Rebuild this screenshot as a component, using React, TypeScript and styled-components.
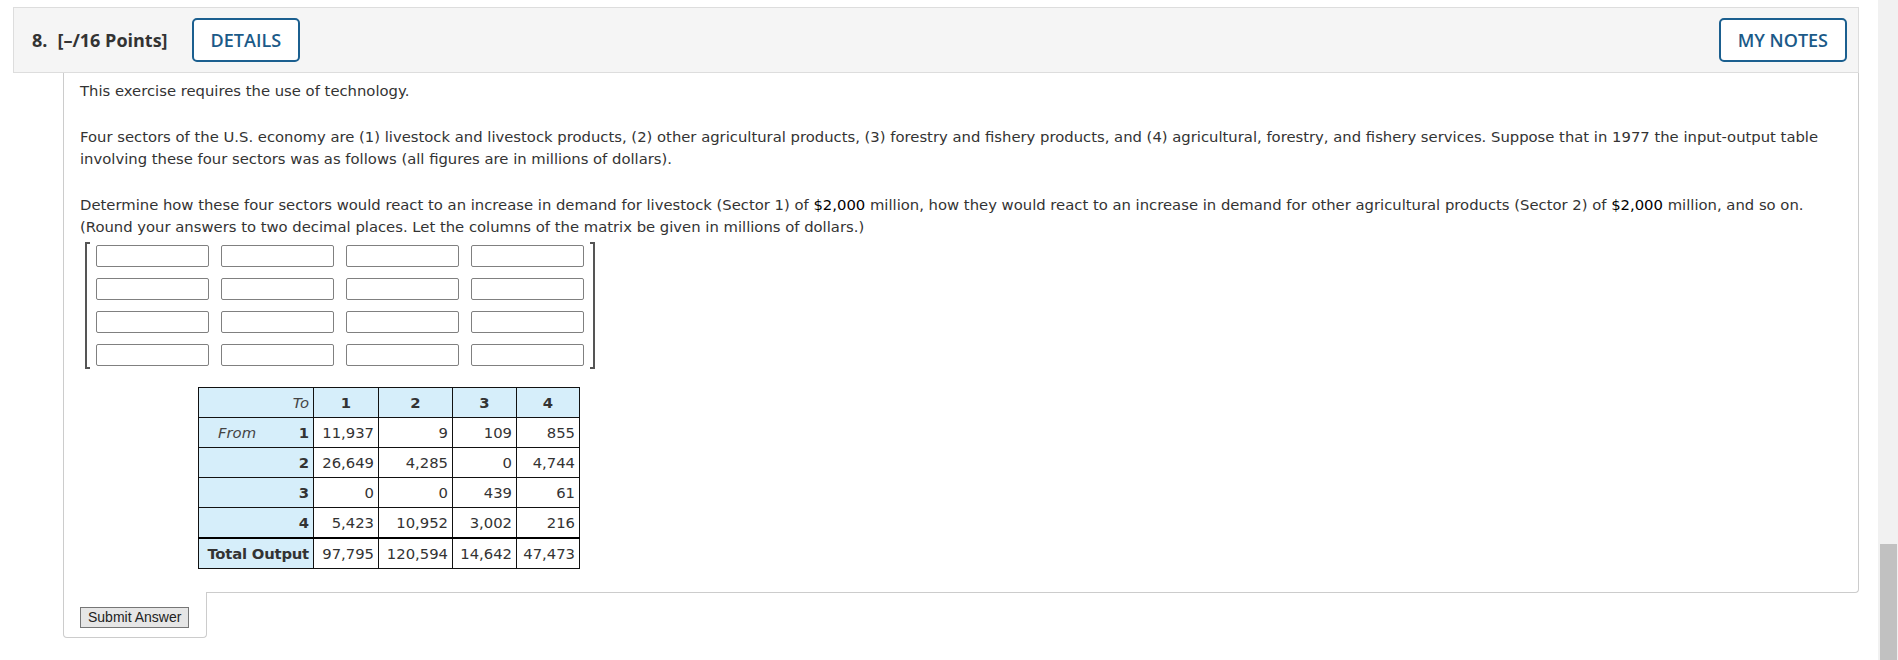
import React from "react";
import styled, { createGlobalStyle } from "styled-components";

const GlobalStyle = createGlobalStyle`
  html, body {
    margin: 0;
    padding: 0;
    height: 100%;
    overflow: hidden;
    background: #ffffff;
  }
  #root {
    height: 100%;
  }
  * {
    box-sizing: border-box;
  }
`;

const Screen = styled.div`
  display: flex;
  height: 100vh;
  width: 100%;
`;

const Page = styled.main`
  flex: 1;
  min-width: 0;
  padding: 7px 19px 0 13px;
  font-family: "DejaVu Sans", Verdana, sans-serif;
  color: #333333;
`;

const Header = styled.header`
  display: flex;
  align-items: center;
  height: 66px;
  padding: 0 11px 0 18px;
  background: #f5f5f5;
  border: 1px solid #dddddd;
  font-family: "Open Sans", sans-serif;
`;

const QuestionNumber = styled.span`
  font-size: 18px;
  font-weight: 700;
  color: #333333;
  margin-right: 10px;
`;

const Points = styled.span`
  font-size: 18px;
  font-weight: 700;
  color: #333333;
  margin-right: 24px;
`;

const HeaderButton = styled.button<{ $push?: boolean }>`
  display: flex;
  align-items: center;
  height: 44px;
  padding: 0 17px;
  margin-left: ${(p) => (p.$push ? "auto" : "0")};
  background: #ffffff;
  border: 2px solid #1b5f8f;
  border-radius: 5px;
  color: #1b5a88;
  font-family: "Open Sans", sans-serif;
  font-size: 18px;
  font-weight: 600;
  cursor: pointer;
`;

const Body = styled.div`
  margin-left: 50px;
`;

const Panel = styled.section`
  border-left: 1px solid #cccccc;
  border-right: 1px solid #cccccc;
  border-bottom: 1px solid #cccccc;
  border-bottom-right-radius: 4px;
  padding: 7px 17px 23px 16px;
`;

const Paragraph = styled.p<{ $last?: boolean }>`
  margin: 0 0 ${(p) => (p.$last ? "0" : "24px")};
  font-size: 14.8px;
  line-height: 22px;
  color: #333333;
`;

const Money = styled.span`
  color: #000000;
`;

const Matrix = styled.div`
  display: flex;
  width: fit-content;
  align-items: stretch;
  margin: 4px 0 0 5px;
`;

const Bracket = styled.div<{ $side: "left" | "right" }>`
  width: 5px;
  border-top: 2px solid #555555;
  border-bottom: 2px solid #555555;
  ${(p) =>
    p.$side === "left"
      ? "border-left: 2px solid #555555;"
      : "border-right: 2px solid #555555;"}
`;

const MatrixGrid = styled.div`
  display: grid;
  grid-template-columns: repeat(4, 113px);
  column-gap: 12px;
  row-gap: 11px;
  padding: 3px 6px;
`;

const Cell = styled.input`
  display: block;
  width: 113px;
  height: 22px;
  border: 1px solid #808080;
  border-radius: 2px;
  background: #ffffff;
  padding: 0 4px;
  font-family: "DejaVu Sans", sans-serif;
  font-size: 13px;
`;

const TableWrap = styled.div`
  margin: 18px 0 0 118px;
`;

const DataTable = styled.table`
  border-collapse: collapse;
  table-layout: fixed;
  width: 381px;
  font-family: "DejaVu Sans", Verdana, sans-serif;
  font-size: 14.8px;
  color: #333333;
`;

const Td = styled.td<{
  $head?: boolean;
  $align?: "left" | "right" | "center";
  $bold?: boolean;
  $thick?: boolean;
}>`
  border: 1px solid #111111;
  ${(p) => (p.$thick ? "border-top: 2px solid #000000;" : "")}
  background: ${(p) => (p.$head ? "#d6eefa" : "#ffffff")};
  text-align: ${(p) => p.$align ?? "right"};
  font-weight: ${(p) => (p.$bold ? 700 : 400)};
  padding: 4px 4px 4px;
  line-height: 21px;
  height: 29px;
  white-space: nowrap;
  overflow: visible;
`;

const Italic = styled.span`
  font-style: italic;
  font-weight: 400;
  color: #444444;
`;

const FromLabel = styled.div`
  display: flex;
  justify-content: space-between;
  padding-left: 15px;
`;

const TotalLabel = styled.span`
  display: block;
  margin-left: -2px;
  letter-spacing: -0.2px;
`;

const SubmitTab = styled.div`
  position: relative;
  width: 144px;
  margin-top: -1px;
  padding: 15px 15px 9px 16px;
  background: #ffffff;
  border: 1px solid #cccccc;
  border-top: none;
  border-radius: 0 0 4px 4px;
`;

const SubmitButton = styled.button`
  display: block;
  height: 21px;
  padding: 0 7px;
  background: #e6e6e6;
  border: 1px solid #767676;
  border-radius: 0;
  color: #222222;
  font-family: "Liberation Sans", Arial, sans-serif;
  font-size: 14px;
  line-height: 19px;
  white-space: nowrap;
  cursor: pointer;
`;

const ScrollTrack = styled.div`
  width: 20px;
  flex: none;
  height: 100%;
  background: #f1f1f1;
  padding: 544px 1px 0 2px;
  overflow: hidden;
`;

const ScrollThumb = styled.div`
  width: 17px;
  height: 200px;
  background: #c1c1c1;
`;

type Row = { label: string; from?: boolean; values: string[] };

const rows: Row[] = [
  { label: "1", from: true, values: ["11,937", "9", "109", "855"] },
  { label: "2", values: ["26,649", "4,285", "0", "4,744"] },
  { label: "3", values: ["0", "0", "439", "61"] },
  { label: "4", values: ["5,423", "10,952", "3,002", "216"] },
];

const totals = ["97,795", "120,594", "14,642", "47,473"];
const colWidths = [115, 65, 74, 64, 63];

export default function App() {
  return (
    <>
      <GlobalStyle />
      <Screen>
        <Page>
          <Header>
            <QuestionNumber>8.</QuestionNumber>
            <Points>[–/16 Points]</Points>
            <HeaderButton>DETAILS</HeaderButton>
            <HeaderButton $push>MY NOTES</HeaderButton>
          </Header>
          <Body>
            <Panel>
              <Paragraph>This exercise requires the use of technology.</Paragraph>
              <Paragraph>
                Four sectors of the U.S. economy are (1) livestock and livestock products, (2) other
                agricultural products, (3) forestry and fishery products, and (4) agricultural,
                forestry, and fishery services. Suppose that in 1977 the input-output table involving
                these four sectors was as follows (all figures are in millions of dollars).
              </Paragraph>
              <Paragraph $last>
                Determine how these four sectors would react to an increase in demand for livestock
                (Sector 1) of <Money>$2,000</Money> million, how they would react to an increase in
                demand for other agricultural products (Sector 2) of <Money>$2,000</Money> million,
                and so on. (Round your answers to two decimal places. Let the columns of the matrix be
                given in millions of dollars.)
              </Paragraph>
              <Matrix>
                <Bracket $side="left" />
                <MatrixGrid>
                  {Array.from({ length: 16 }).map((_, i) => (
                    <Cell key={i} type="text" aria-label={`entry ${i + 1}`} />
                  ))}
                </MatrixGrid>
                <Bracket $side="right" />
              </Matrix>
              <TableWrap>
                <DataTable>
                  <colgroup>
                    {colWidths.map((w, i) => (
                      <col key={i} style={{ width: w }} />
                    ))}
                  </colgroup>
                  <tbody>
                    <tr>
                      <Td $head>
                        <Italic>To</Italic>
                      </Td>
                      {["1", "2", "3", "4"].map((h) => (
                        <Td key={h} $head $bold $align="center">
                          {h}
                        </Td>
                      ))}
                    </tr>
                    {rows.map((r) => (
                      <tr key={r.label}>
                        <Td $head $bold>
                          {r.from ? (
                            <FromLabel>
                              <Italic>From</Italic>
                              <span>{r.label}</span>
                            </FromLabel>
                          ) : (
                            r.label
                          )}
                        </Td>
                        {r.values.map((v, i) => (
                          <Td key={i}>{v}</Td>
                        ))}
                      </tr>
                    ))}
                    <tr>
                      <Td $head $bold $thick>
                        <TotalLabel>Total Output</TotalLabel>
                      </Td>
                      {totals.map((v, i) => (
                        <Td key={i} $thick>
                          {v}
                        </Td>
                      ))}
                    </tr>
                  </tbody>
                </DataTable>
              </TableWrap>
            </Panel>
            <SubmitTab>
              <SubmitButton>Submit Answer</SubmitButton>
            </SubmitTab>
          </Body>
        </Page>
        <ScrollTrack>
          <ScrollThumb />
        </ScrollTrack>
      </Screen>
    </>
  );
}
